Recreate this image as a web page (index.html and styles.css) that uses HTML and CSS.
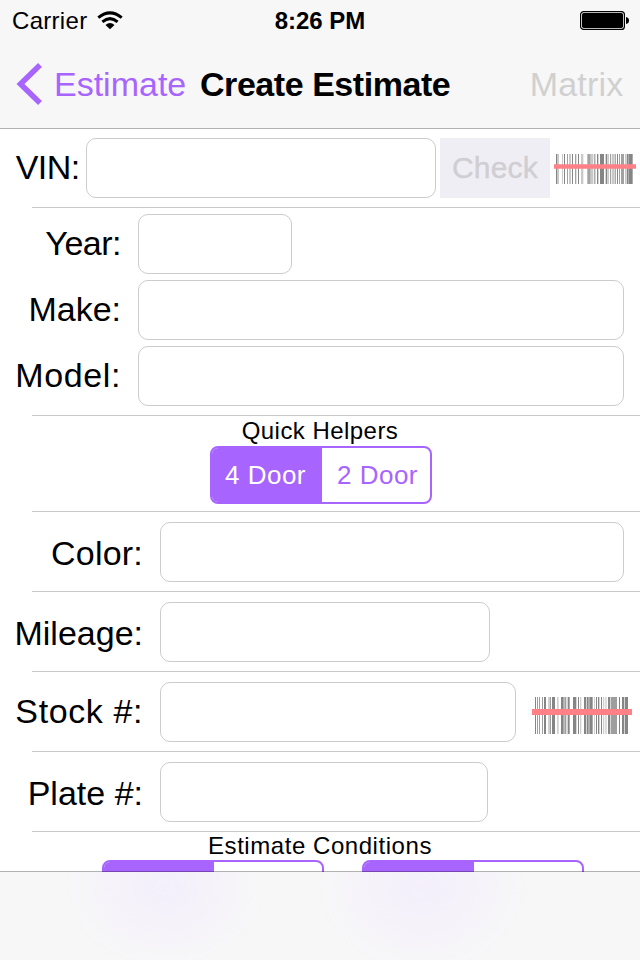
FILE: index.html
```html
<!DOCTYPE html>
<html lang="en">
<head>
<meta charset="utf-8">
<title>Create Estimate</title>
<link rel="stylesheet" href="styles.css">
</head>
<body>
<div class="screen">
  <header class="header">
    <div class="status">
      <div class="carrier"><span>Carrier</span>
        <svg class="wifi" width="26" height="19" viewBox="0 0 26 19"><g fill="none" stroke="#000" stroke-width="3"><path d="M1.3 6.6Q13-2.9 24.7 6.6"/><path d="M5.4 10.8Q13 4.4 20.6 10.8"/></g><path d="M8.5 13.9Q13 10.2 17.5 13.9L13 18.3Z"/></svg>
      </div>
      <div class="time">8:26 PM</div>
      <svg class="battery" width="50" height="19" viewBox="0 0 50 19"><rect x=".6" y=".6" width="43.8" height="17.8" rx="3" fill="none" stroke="#000" stroke-width="1.2"/><rect x="2" y="2" width="41" height="15" rx="1.7"/><path d="M46 6Q49 6.5 49 9.5T46 13Z"/></svg>
    </div>
    <nav class="nav">
      <div class="back"><svg width="27" height="42" viewBox="0 0 27 42"><path d="M24 2L4.5 21L24 40" fill="none" stroke="#a864ff" stroke-width="5.5"/></svg><span class="back-text">Estimate</span></div>
      <h1 class="title">Create Estimate</h1>
      <div class="matrix">Matrix</div>
    </nav>
  </header>
  <main class="form">
    <section class="row vin">
      <label class="label l-vin">VIN:</label><div class="field f-vin"></div>
      <div class="check">Check</div>
      <svg class="code-small" width="82" height="30" viewBox="0 0 246 90">
        <g fill="#858585"><path d="M6 0h3v90h-3zM30 0h3v90h-3zM54 0h3v90h-3zM72 0h3v90h-3zM121 0h3v90h-3zM129 0h4v90h-4zM138 0h12v90h-12zM155 0h5v90h-5zM182 0h3v90h-3zM189 0h3v90h-3zM218 0h4v90h-4zM223 0h13v90h-13z"/></g>
        <g fill="#a2a2a2"><path d="M39 0h3v90h-3zM63 0h4v90h-4zM100 0h10v90h-10zM168 0h3v90h-3zM195 0h3v90h-3zM201 0h9v90h-9z"/></g>
        <g fill="#c9c9c9"><path d="M9 0h6v90h-6zM24 0h3v90h-3zM45 0h6v90h-6zM81 0h7v90h-7zM111 0h7v90h-7zM161 0h4v90h-4zM173 0h7v90h-7zM213 0h3v90h-3z"/></g>
        <path fill="#ff8087" d="M0 31h246v13H0z"/>
      </svg>
    </section>
    <section class="car">
      <div class="line"><label class="label l-car year">Year:</label><div class="field f-year"></div></div>
      <div class="line"><label class="label l-car">Make:</label><div class="field f-wide"></div></div>
      <div class="line"><label class="label l-car model">Model:</label><div class="field f-wide"></div></div>
    </section>
    <section class="helpers">
      <div class="caption">Quick Helpers</div>
      <div class="segmented"><div class="seg on">4 Door</div><div class="seg">2 Door</div></div>
    </section>
    <section class="row"><label class="label l-info low color">Color:</label><div class="field f-color"></div></section>
    <section class="row"><label class="label l-info low">Mileage:</label><div class="field f-mileage"></div></section>
    <section class="row"><label class="label l-info stock">Stock #:</label><div class="field f-stock"></div>
      <svg class="code-large" width="100" height="37" viewBox="0 0 300 111">
        <g fill="#858585"><path d="M9 0h3v111h-3zM36 0h6v111h-6zM60 0h9v111h-9zM87 0h8v111h-8zM107 0h6v111h-6zM123 0h10v111h-10zM138 0h3v111h-3zM156 0h7v111h-7zM165 0h5v111h-5zM172 0h10v111h-10zM192 0h3v111h-3zM198 0h4v111h-4zM207 0h3v111h-3zM228 0h7v111h-7zM261 0h3v111h-3zM270 0h6v111h-6zM278 0h10v111h-10z"/></g>
        <g fill="#9e9e9e"><path d="M15 0h3v111h-3zM21 0h3v111h-3zM30 0h3v111h-3zM54 0h3v111h-3zM97 0h6v111h-6zM237 0h18v111h-18z"/></g>
        <g fill="#d0d0d0"><path d="M48 0h6v111h-6zM75 0h5v111h-5zM144 0h4v111h-4zM186 0h3v111h-3zM213 0h4v111h-4zM220 0h4v111h-4z"/></g>
        <path fill="#ff8087" d="M0 36h300v18H0z"/>
      </svg>
    </section>
    <section class="row"><label class="label l-info low">Plate #:</label><div class="field f-plate"></div></section>
    <section class="conditions">
      <div class="caption">Estimate Conditions</div>
      <div class="pair">
        <div class="segmented"><div class="seg on"></div><div class="seg"></div></div>
        <div class="segmented"><div class="seg on"></div><div class="seg"></div></div>
      </div>
    </section>
  </main>
  <footer class="toolbar"></footer>
</div>
</body>
</html>
```
FILE: styles.css
```css
* { box-sizing: border-box; }
body { margin: 0; font-family: "Liberation Sans", Arial, sans-serif; color: #000; background: #fff; }
svg { display: block; flex: none; }
.screen { width: 640px; height: 960px; display: flex; flex-direction: column; overflow: hidden; }
.header { height: 129px; flex: none; background: #f7f7f7; border-bottom: 1px solid #b2b2b2; }
.status { height: 40px; display: grid; grid-template-columns: 1fr auto 1fr; font-size: 24px; line-height: 42px; }
.carrier { display: flex; padding-left: 12px; letter-spacing: .3px; }
.wifi { margin: 11px 0 0 9.5px; }
.time { font-weight: bold; }
.battery { justify-self: end; margin: 11px 10px 0 0; }
.nav { height: 88px; display: flex; padding-left: 16px; font-size: 34px; line-height: 88px; white-space: nowrap; }
.back { width: 184px; display: flex; color: #a864ff; }
.back svg { margin-top: 23px; }
.back-text { margin-left: 11px; }
.title { margin: 0; width: 260px; font-size: 34px; font-weight: bold; letter-spacing: -.45px; }
.matrix { margin-left: auto; padding-right: 16.5px; color: #d0d0d0; letter-spacing: .2px; }
.form { height: 743px; flex: none; overflow: hidden; }
.row, .car, .helpers { background: linear-gradient(#c8c7cc, #c8c7cc) 32px 100% / 100% 1px no-repeat; }
.row { height: 80px; padding-top: 10px; display: flex; }
.vin { height: 79px; padding-top: 9px; }
.label { flex: none; text-align: right; font-size: 34px; line-height: 58px; height: 60px; white-space: nowrap; }
.low { line-height: 62px; }
.l-vin { width: 86px; padding-right: 6.5px; letter-spacing: -.6px; }
.l-car { width: 138px; padding-right: 17px; }
.l-info { width: 160px; padding-right: 17px; }
.year { letter-spacing: -.5px; }
.model { letter-spacing: .6px; }
.color { letter-spacing: .2px; }
.stock { letter-spacing: .6px; }
.field { height: 60px; border: 1px solid #ccc; border-radius: 10px; background: #fff; }
.f-vin { width: 350px; }
.f-year { width: 154px; }
.f-wide { width: 486px; }
.f-color { width: 464px; }
.f-mileage { width: 330px; }
.f-stock { width: 356px; }
.f-plate { width: 328px; }
.check { width: 110px; height: 60px; margin-left: 4px; background: #efeef4; color: #d0ced2; -webkit-text-stroke: .4px #d0ced2; text-align: center; font-size: 30px; line-height: 60px; letter-spacing: .2px; }
.code-small { margin: 16px 0 0 4px; }
.code-large { margin: 15px 0 0 16px; }
.car { height: 208px; padding-top: 6px; display: flex; flex-direction: column; gap: 6px; }
.line { display: flex; }
.helpers { height: 96px; }
.caption { height: 30px; line-height: 29px; font-size: 24px; text-align: center; letter-spacing: .45px; }
.segmented { width: 222px; height: 58px; display: flex; border: 2px solid #a864ff; border-radius: 8px; overflow: hidden; color: #a864ff; }
.helpers .segmented { margin-left: 210px; }
.seg { flex: 1; padding-left: 3px; text-align: center; font-size: 26px; line-height: 55px; letter-spacing: .5px; }
.seg.on { flex: 0 0 110px; padding: 0 3px 0 0; background: #a864ff; color: #fff; }
.conditions .caption { height: 28px; line-height: 27px; letter-spacing: .55px; }
.pair { display: flex; gap: 38px; padding-left: 102px; }
.toolbar { height: 89px; flex: none; margin-top: -1px; z-index: 1; border-top: 1px solid rgba(0, 0, 0, .3); background: radial-gradient(ellipse 105px 85px at 165px 15px, #f4effc, transparent) padding-box, radial-gradient(ellipse 110px 90px at 422px 15px, #f4effc, transparent) padding-box, linear-gradient(#f7f7f7, #f7f7f7) padding-box; }
```
